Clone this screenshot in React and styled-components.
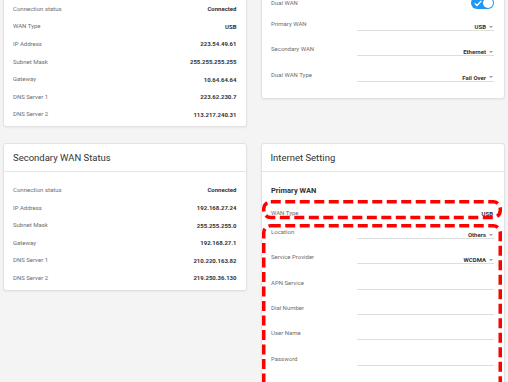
import styled, { createGlobalStyle } from "styled-components";

const GlobalStyle = createGlobalStyle`
  html, body {
    margin: 0;
    background: #f4f4f4;
    overflow: hidden;
  }
  body {
    font-family: Roboto, "Liberation Sans", sans-serif;
  }
`;

const primaryStatus = [
  ["Connection status", "Connected"],
  ["WAN Type", "USB"],
  ["IP Address", "223.54.49.61"],
  ["Subnet Mask", "255.255.255.255"],
  ["Gateway", "10.64.64.64"],
  ["DNS Server 1", "223.62.230.7"],
  ["DNS Server 2", "113.217.240.31"],
];

const secondaryStatus = [
  ["Connection status", "Connected"],
  ["IP Address", "192.168.27.24"],
  ["Subnet Mask", "255.255.255.0"],
  ["Gateway", "192.168.27.1"],
  ["DNS Server 1", "210.220.163.82"],
  ["DNS Server 2", "219.250.36.130"],
];

const mobileFields = [
  ["Location", "Others"],
  ["Service Provider", "WCDMA"],
  ["APN Service", null],
  ["Dial Number", null],
  ["User Name", null],
  ["Password", null],
  ["Authentication Type", "None"],
];

function StatusCard({ title, rows }) {
  return (
    <Card>
      <CardHeader>{title}</CardHeader>
      <StatusBody>
        {rows.map(([label, value]) => (
          <StatusRow key={label}>
            <Label>{label}</Label>
            <Value>{value}</Value>
          </StatusRow>
        ))}
      </StatusBody>
    </Card>
  );
}

function SelectField({ label, value }) {
  return (
    <FieldRow>
      <Label>{label}</Label>
      <Field>
        {value && <Value>{value}</Value>}
        {value && <Caret />}
      </Field>
    </FieldRow>
  );
}

// red dashed annotation drawn over a group of rows
function Highlight({ $top, $bottom, children }) {
  return (
    <HighlightBox>
      {children}
      <DashFrame $top={$top} $bottom={$bottom}>
        <svg width="100%" height="100%">
          <DashRect x="1.75" y="1.75" rx="7" ry="7" />
        </svg>
      </DashFrame>
    </HighlightBox>
  );
}

export default function App() {
  return (
    <>
      <GlobalStyle />
      <Page>
        <StatusCard title="Primary WAN Status" rows={primaryStatus} />

        <Card>
          <CardHeader>Dual WAN Setting</CardHeader>
          <FormBody $pad="0 9.5px 7px">
            <ToggleRow>
              <Label>Dual WAN</Label>
              <Toggle>
                <svg width="8" height="7" viewBox="0 0 8 7">
                  <path
                    d="M1 3.6 L3 5.5 L7 1.3"
                    fill="none"
                    stroke="#fff"
                    strokeWidth="1.3"
                    strokeLinecap="round"
                    strokeLinejoin="round"
                  />
                </svg>
                <Knob />
              </Toggle>
            </ToggleRow>
            <SelectField label="Primary WAN" value="USB" />
            <SelectField label="Secondary WAN" value="Ethernet" />
            <SelectField label="Dual WAN Type" value="Fail Over" />
          </FormBody>
        </Card>

        <StatusCard title="Secondary WAN Status" rows={secondaryStatus} />

        <Card>
          <CardHeader>Internet Setting</CardHeader>
          <FormBody $pad="14px 9.5px 20px">
            <SectionTitle>Primary WAN</SectionTitle>
            <Highlight $top="-2.8px" $bottom="3.6px">
              <PlainRow>
                <Label>WAN Type</Label>
                <Value>USB</Value>
              </PlainRow>
            </Highlight>
            <Highlight $top="0.8px" $bottom="-4px">
              {mobileFields.map(([label, value]) => (
                <SelectField key={label} label={label} value={value} />
              ))}
            </Highlight>
          </FormBody>
        </Card>
      </Page>
    </>
  );
}

const Page = styled.div`
  display: grid;
  grid-template-columns: 244px 244px;
  column-gap: 13.5px;
  row-gap: 16px;
  align-items: start;
  padding-left: 3px;
  margin-top: -38px;
`;

const Card = styled.div`
  background: #fff;
  border: 1px solid #e2e2e2;
  border-radius: 3px;
  box-shadow: 0 1px 2px rgba(0, 0, 0, 0.05);
`;

const CardHeader = styled.div`
  box-sizing: border-box;
  height: 28px;
  padding: 0 9px;
  display: flex;
  align-items: center;
  border-bottom: 1px solid #e6e6e6;
  font-size: 9.5px;
  color: #333;
`;

const StatusBody = styled.div`
  padding: 9px 9.5px 3px 9px;
`;

const StatusRow = styled.div`
  height: 17.6px;
  display: flex;
  align-items: center;
  justify-content: space-between;
`;

const Label = styled.span`
  font-size: 6px;
  line-height: 8px;
  color: #6e6e6e;
  white-space: nowrap;
`;

const Value = styled.span`
  font-size: 6px;
  line-height: 7px;
  font-weight: 700;
  color: #333;
  white-space: nowrap;
`;

const FormBody = styled.div`
  padding: ${({ $pad }) => $pad};
`;

const ToggleRow = styled.div`
  height: 24px;
  display: flex;
  align-items: center;
  justify-content: space-between;
`;

const Toggle = styled.div`
  box-sizing: border-box;
  width: 23px;
  height: 12.5px;
  border-radius: 7px;
  background: #2196f3;
  display: flex;
  align-items: center;
  justify-content: space-between;
  padding: 0 1px 0 3px;
  svg {
    display: block;
  }
`;

const Knob = styled.div`
  width: 10.5px;
  height: 10.5px;
  border-radius: 50%;
  background: #fff;
`;

const FieldRow = styled.div`
  height: 25.3px;
  display: grid;
  grid-template-columns: 86px 1fr;
  align-items: start;
  ${Label} {
    margin-top: 5px;
  }
`;

const Field = styled.div`
  box-sizing: border-box;
  margin-top: 7px;
  height: 9px;
  padding: 1px 1px 0 0;
  border-bottom: 1px solid #dedede;
  display: flex;
  align-items: center;
  justify-content: flex-end;
`;

const Caret = styled.span`
  margin-left: 3px;
  width: 0;
  height: 0;
  border-left: 2px solid transparent;
  border-right: 2px solid transparent;
  border-top: 2.5px solid #9a9a9a;
`;

const SectionTitle = styled.div`
  font-size: 7.5px;
  line-height: 10px;
  font-weight: 700;
  color: #333;
  margin-bottom: 7px;
`;

const PlainRow = styled.div`
  height: 20px;
  display: flex;
  align-items: center;
  justify-content: space-between;
  padding-right: 1px;
`;

const HighlightBox = styled.div`
  position: relative;
`;

const DashFrame = styled.div`
  position: absolute;
  left: -9px;
  right: -8px;
  top: ${({ $top }) => $top};
  bottom: ${({ $bottom }) => $bottom};
  pointer-events: none;
  svg {
    display: block;
    overflow: visible;
  }
`;

const DashRect = styled.rect`
  width: calc(100% - 3.5px);
  height: calc(100% - 3.5px);
  fill: none;
  stroke: #f00;
  stroke-width: 3.5px;
  stroke-dasharray: 10 4.5;
`;
